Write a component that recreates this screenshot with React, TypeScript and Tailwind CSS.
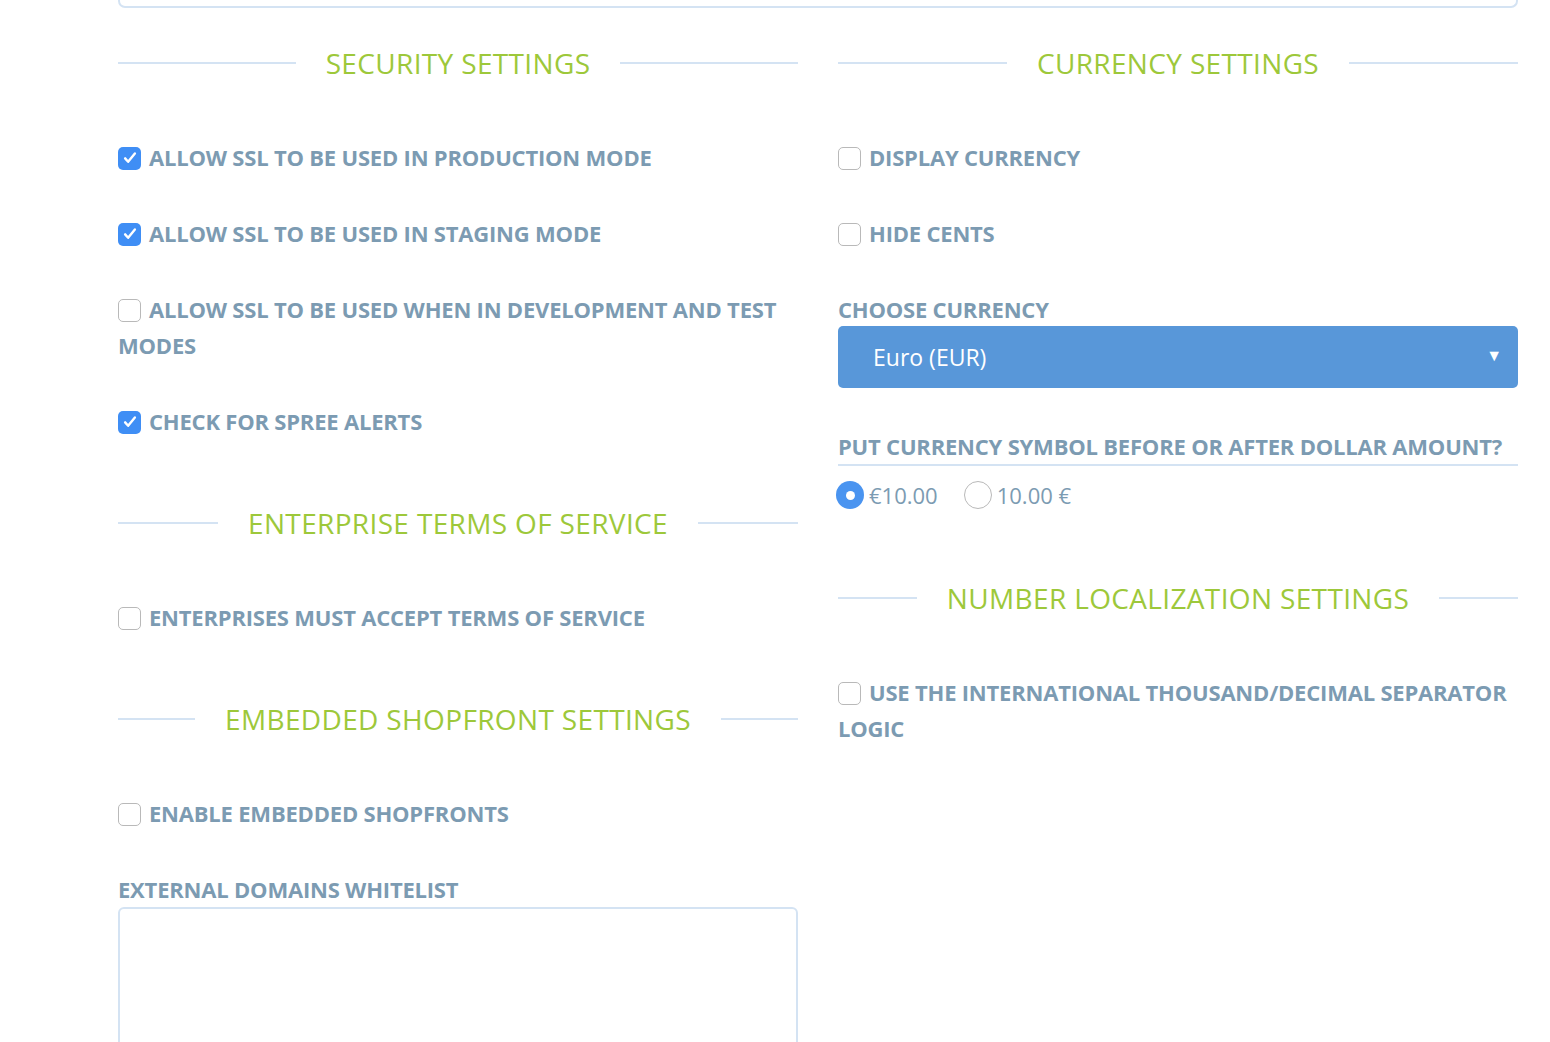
import React from 'react';

const font = { fontFamily: '"Open Sans", "Liberation Sans", sans-serif' };

const SectionTitle = ({ title, className = 'mt-[26px]' }: { title: string; className?: string }) => (
  <div className={`flex items-center h-9 mb-[58px] ${className}`}>
    <div className="flex-1 h-[2px] bg-[#d4e3f3]" />
    <h2 className="px-[30px] text-[28px] leading-9 text-[#9dc83a] tracking-[0.35px] whitespace-nowrap">{title}</h2>
    <div className="flex-1 h-[2px] bg-[#d4e3f3]" />
  </div>
);

const CheckIcon = () => (
  <svg viewBox="0 0 24 24" className="w-[18px] h-[18px]" fill="none" stroke="white" strokeWidth="3.2" strokeLinecap="round" strokeLinejoin="round">
    <path d="M5.5 12.5l4 4.5L18.5 6" />
  </svg>
);

const CheckRow = ({ label, checked = false }: { label: string; checked?: boolean }) => (
  <div className="mb-10 text-[22px] leading-9 font-bold text-[#7c9bb2] tracking-[-0.2px]">
    <span
      className={
        checked
          ? 'inline-flex items-center justify-center align-middle w-[23px] h-[23px] rounded-[5px] bg-[#3f8ef5] mr-2 -mt-1'
          : 'inline-flex align-middle w-[23px] h-[23px] rounded-[5px] border border-[#b9b9b9] bg-white mr-2 -mt-1'
      }
    >
      {checked && <CheckIcon />}
    </span>
    {label}
  </div>
);

const Label = ({ children, underline = false }: { children: React.ReactNode; underline?: boolean }) => (
  <div
    className={
      underline
        ? 'text-[22px] leading-[35px] font-bold text-[#7c9bb2] tracking-[-0.2px] border-b-2 border-[#d4e3f3]'
        : 'text-[22px] leading-9 font-bold text-[#7c9bb2] tracking-[-0.2px]'
    }
  >
    {children}
  </div>
);

const Radio = ({ label, selected = false }: { label: string; selected?: boolean }) => (
  <label className="flex items-center gap-[5px] mr-[26px]">
    {selected ? (
      <span className="w-[28px] h-[28px] rounded-full bg-[#4a94f0] flex items-center justify-center">
        <span className="w-[9px] h-[9px] rounded-full bg-white" />
      </span>
    ) : (
      <span className="w-[28px] h-[28px] rounded-full border border-[#b9b9b9] bg-white" />
    )}
    <span className="text-[22px] text-[#7c9bb2]">{label}</span>
  </label>
);

export default function App() {
  return (
    <div className="min-h-screen bg-white overflow-hidden" style={font}>
      <div className="w-[1400px] ml-[118px]">
        <div className="h-[8px] border-2 border-t-0 border-[#d4e3f3] rounded-b-[7px]" />
        <div className="grid grid-cols-2 gap-10 pt-[11px]">
          {/* Left column */}
          <div className="flex flex-col">
            <SectionTitle title="SECURITY SETTINGS" />
            <CheckRow label="ALLOW SSL TO BE USED IN PRODUCTION MODE" checked />
            <CheckRow label="ALLOW SSL TO BE USED IN STAGING MODE" checked />
            <CheckRow label="ALLOW SSL TO BE USED WHEN IN DEVELOPMENT AND TEST MODES" />
            <CheckRow label="CHECK FOR SPREE ALERTS" checked />

            <SectionTitle title="ENTERPRISE TERMS OF SERVICE" />
            <CheckRow label="ENTERPRISES MUST ACCEPT TERMS OF SERVICE" />

            <SectionTitle title="EMBEDDED SHOPFRONT SETTINGS" />
            <CheckRow label="ENABLE EMBEDDED SHOPFRONTS" />

            <Label>EXTERNAL DOMAINS WHITELIST</Label>
            <textarea className="block w-full h-[160px] border-2 border-[#d4e3f3] rounded-[6px] resize-none outline-none" />
          </div>

          {/* Right column */}
          <div className="flex flex-col">
            <SectionTitle title="CURRENCY SETTINGS" />
            <CheckRow label="DISPLAY CURRENCY" />
            <CheckRow label="HIDE CENTS" />

            <Label>CHOOSE CURRENCY</Label>
            <div className="h-[62px] -mt-px rounded-[5px] bg-[#5897d9] flex items-center justify-between pl-[35px] pr-[16px]">
              <span className="text-[23px] text-white">Euro (EUR)</span>
              <span className="text-[16px] text-white -mt-1">▼</span>
            </div>

            <div className="mt-[41px]">
              <Label underline>PUT CURRENCY SYMBOL BEFORE OR AFTER DOLLAR AMOUNT?</Label>
            </div>
            <div className="flex items-center h-[28px] mt-[15px] -ml-[2px]">
              <Radio label="€10.00" selected />
              <Radio label="10.00 €" />
            </div>

            <SectionTitle title="NUMBER LOCALIZATION SETTINGS" className="mt-[71px]" />
            <CheckRow label="USE THE INTERNATIONAL THOUSAND/DECIMAL SEPARATOR LOGIC" />
          </div>
        </div>
      </div>
    </div>
  );
}
